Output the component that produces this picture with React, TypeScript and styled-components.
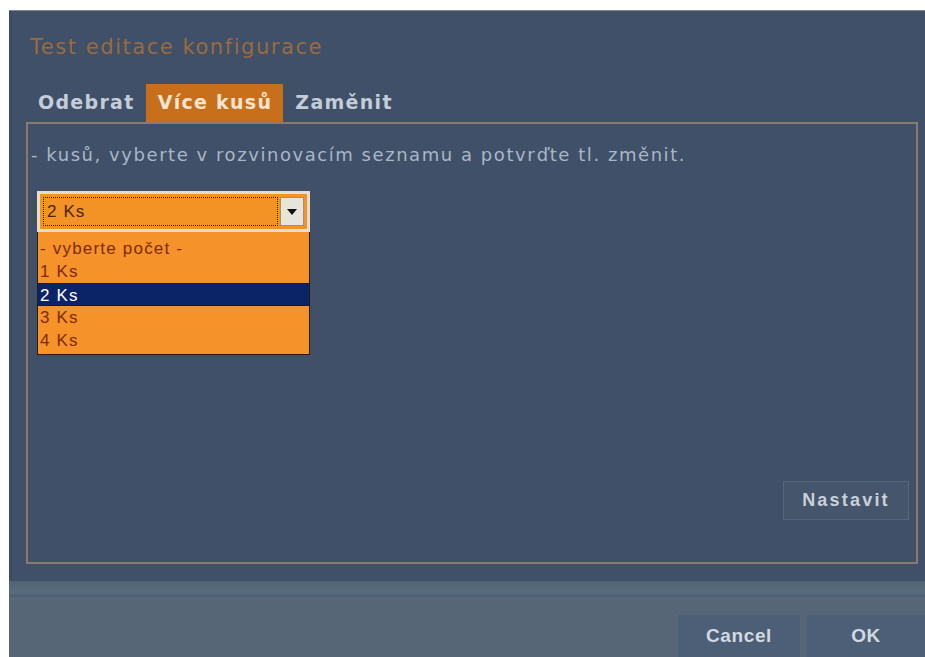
import styled, { createGlobalStyle } from "styled-components";

const GlobalStyle = createGlobalStyle`
  html, body {
    margin: 0;
    padding: 0;
    background: #ffffff;
  }
  body {
    width: 925px;
    height: 657px;
    overflow: hidden;
  }
`;

const options = ["- vyberte počet -", "1 Ks", "2 Ks", "3 Ks", "4 Ks"];
const selected = "2 Ks";

const Dialog = styled.div`
  margin: 10px 0 0 9px;
  height: 647px;
  display: flex;
  flex-direction: column;
  border-top: 1px solid #7d8a8a;
  box-sizing: border-box;
  font-family: "DejaVu Sans", Verdana, sans-serif;
`;

const Body = styled.div`
  height: 570px;
  background: #3f5068;
  padding: 0 7px 0 14px;
  box-sizing: border-box;
  display: flex;
  flex-direction: column;
  border-left: 3px solid #3b4c63;
`;

const Title = styled.div`
  color: #9a6b3d;
  font-size: 21px;
  height: 73px;
  line-height: 72px;
  padding-left: 4px;
  letter-spacing: 1.55px;
`;

const Tabs = styled.div`
  display: flex;
  height: 38px;
`;

const Tab = styled.div<{ $active?: boolean }>`
  padding: 0 11px 0 12px;
  font-size: 19px;
  font-weight: bold;
  letter-spacing: 1.3px;
  line-height: 36px;
  color: ${(p) => (p.$active ? "#f4e4d2" : "#c3cdd8")};
  background: ${(p) => (p.$active ? "#c86f1b" : "transparent")};
`;

const Content = styled.div`
  height: 442px;
  border: 2px solid #8a7b6d;
  box-sizing: border-box;
  padding: 20px 7px 42px 3px;
  display: flex;
  flex-direction: column;
`;

const Hint = styled.div`
  color: #a9b7c7;
  font-size: 18px;
  letter-spacing: 1.55px;
  line-height: 22px;
`;

const SelectWrap = styled.div`
  position: relative;
  margin: 25px 0 0 6px;
  width: 273px;
  font-family: "Liberation Sans", Arial, sans-serif;
`;

const SelectBox = styled.div`
  height: 41px;
  border: 3px solid #e9dccd;
  box-sizing: border-box;
  background: #f39326;
  display: flex;
  align-items: center;
  padding: 3px;
`;

const SelectValue = styled.div`
  flex: 1;
  height: 100%;
  border: 1px dotted #3a1a05;
  box-sizing: border-box;
  padding-left: 3px;
  color: #4a2508;
  font-size: 17px;
  letter-spacing: 1.1px;
  display: flex;
  align-items: center;
`;

const ArrowButton = styled.div`
  width: 24px;
  height: 100%;
  margin-left: 2px;
  background: #e7e3dd;
  border: 1px solid #a09080;
  box-sizing: border-box;
  display: flex;
  align-items: center;
  justify-content: center;
`;

const List = styled.div`
  position: absolute;
  left: 0;
  top: 41px;
  width: 273px;
  padding: 5px 0 2px;
  background: #f5922a;
  border: 1px solid #2a1a10;
  border-top: none;
  box-sizing: border-box;
  z-index: 2;
`;

const Item = styled.div<{ $active?: boolean }>`
  height: 23px;
  line-height: 23px;
  padding-left: 2px;
  font-size: 17px;
  letter-spacing: 1.2px;
  color: ${(p) => (p.$active ? "#ffffff" : "#7c2b06")};
  background: ${(p) => (p.$active ? "#0b2467" : "transparent")};
  border-top: ${(p) => (p.$active ? "1px solid #1a1a2a" : "none")};
  border-bottom: ${(p) => (p.$active ? "1px solid #1a1a2a" : "none")};
  box-sizing: border-box;
`;

const Spacer = styled.div`
  flex: 1;
`;

const ActionRow = styled.div`
  display: flex;
  justify-content: flex-end;
`;

const FlatButton = styled.div<{ $width: number }>`
  width: ${(p) => p.$width}px;
  height: 39px;
  background: #44556c;
  border: 1px solid #56677d;
  box-sizing: border-box;
  color: #c9d0d9;
  font-family: "Liberation Sans", Arial, sans-serif;
  font-weight: bold;
  font-size: 18px;
  display: flex;
  align-items: center;
  justify-content: center;
  letter-spacing: 2.2px;
`;

const Band = styled.div`
  height: 20px;
  background: linear-gradient(
    to bottom,
    #4f6472 0px,
    #56697a 6px,
    #5a6b80 12px,
    #4c5d70 15px,
    #5a6a7c 17px,
    #56677a 20px
  );
`;

const Footer = styled.div`
  flex: 1;
  background: #566677;
  display: flex;
  justify-content: flex-end;
  align-items: flex-end;
  gap: 7px;
`;

const FooterButton = styled.div<{ $width: number }>`
  width: ${(p) => p.$width}px;
  height: 42px;
  background: #4d5f76;
  color: #d2d9e1;
  font-family: "Liberation Sans", Arial, sans-serif;
  font-weight: bold;
  font-size: 19px;
  letter-spacing: 0.6px;
  display: flex;
  align-items: center;
  justify-content: center;
`;

export default function App() {
  return (
    <>
      <GlobalStyle />
      <Dialog>
        <Body>
          <Title>Test editace konfigurace</Title>
          <Tabs>
            <Tab>Odebrat</Tab>
            <Tab $active>Více kusů</Tab>
            <Tab>Zaměnit</Tab>
          </Tabs>
          <Content>
            <Hint>- kusů, vyberte v rozvinovacím seznamu a potvrďte tl. změnit.</Hint>
            <SelectWrap>
              <SelectBox>
                <SelectValue>{selected}</SelectValue>
                <ArrowButton>
                  <svg width="10" height="6" viewBox="0 0 10 6">
                    <path d="M0 0 H10 L5 6 Z" fill="#111" />
                  </svg>
                </ArrowButton>
              </SelectBox>
              <List>
                {options.map((o) => (
                  <Item key={o} $active={o === selected}>
                    {o}
                  </Item>
                ))}
              </List>
            </SelectWrap>
            <Spacer />
            <ActionRow>
              <FlatButton $width={126}>Nastavit</FlatButton>
            </ActionRow>
          </Content>
        </Body>
        <Band />
        <Footer>
          <FooterButton $width={122}>Cancel</FooterButton>
          <FooterButton $width={118}>OK</FooterButton>
        </Footer>
      </Dialog>
    </>
  );
}
